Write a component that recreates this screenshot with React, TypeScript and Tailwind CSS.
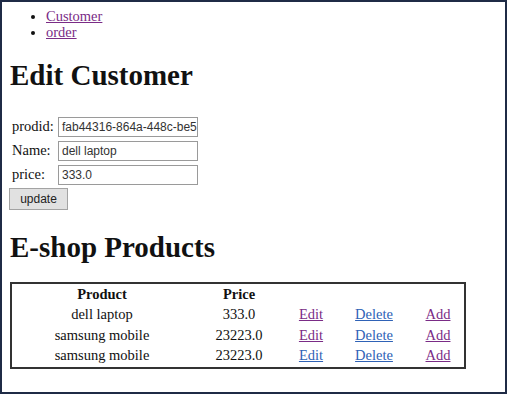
import React from 'react';

const serif = "font-['Liberation_Serif','Times_New_Roman',serif]";
const sans = "font-['Liberation_Sans',Arial,sans-serif]";

const purple = 'text-[#7a2c86] decoration-[#7a2c86]';
const blue = 'text-[#2f62b6] decoration-[#2f62b6]';

interface Product {
  name: string;
  price: string;
  editVisited: boolean;
}

const PRODUCTS: Product[] = [
  { name: 'dell laptop', price: '333.0', editVisited: true },
  { name: 'samsung mobile', price: '23223.0', editVisited: true },
  { name: 'samsung mobile', price: '23223.0', editVisited: false },
];

const cols = 'grid grid-cols-[180px_94px_50px_76px_52px] h-[20.3px] items-center text-center';

function Field({ label, value }: { label: string; value: string }) {
  return (
    <div className="flex items-center h-[24px]">
      <span className="w-[48px] pl-[2px]">{label}</span>
      <div
        className={`w-[140px] h-[20px] border border-[#9a9a9a] pl-[3px] overflow-hidden whitespace-nowrap text-[12px] leading-[18px] text-[#333] ${sans}`}
      >
        {value}
      </div>
    </div>
  );
}

export default function App() {
  return (
    <div className="w-[508px] h-[395px] bg-white">
      <div className={`w-[507px] h-[394px] border-2 border-[#1f2b46] text-[14.5px] text-[#111] ${serif}`}>
        <ul className="list-disc pl-[44px] mt-[6px] leading-[16px]">
          <li>
            <a href="#" className={`underline ${purple}`}>Customer</a>
          </li>
          <li>
            <a href="#" className={`underline ${purple}`}>order</a>
          </li>
        </ul>

        <div className="pl-[8px]">
          <h1 className="mt-[19px] text-[29px] font-bold leading-[32px]">Edit Customer</h1>

          <div className="mt-[24px] flex flex-col">
            <Field label="prodid:" value="fab44316-864a-448c-be5" />
            <Field label="Name:" value="dell laptop" />
            <Field label="price:" value="333.0" />
          </div>
          <button
            type="button"
            className={`mt-[1px] -ml-[1px] w-[59px] h-[22px] border border-[#a3a3a3] bg-[#e1e1e1] text-[12px] text-[#222] ${sans}`}
          >
            update
          </button>

          <h1 className="mt-[21px] text-[29px] font-bold leading-[32px]">E-shop Products</h1>

          <div className="mt-[19px] w-[456px] border-2 border-[#333] pb-[2px]">
            <div className={`${cols} font-bold`}>
              <span>Product</span>
              <span>Price</span>
              <span />
              <span />
              <span />
            </div>
            {PRODUCTS.map((p, i) => (
              <div key={i} className={cols}>
                <span>{p.name}</span>
                <span>{p.price}</span>
                <a href="#" className={`underline ${p.editVisited ? purple : blue}`}>Edit</a>
                <a href="#" className={`underline ${blue}`}>Delete</a>
                <a href="#" className={`underline ${purple}`}>Add</a>
              </div>
            ))}
          </div>
        </div>
      </div>
    </div>
  );
}
